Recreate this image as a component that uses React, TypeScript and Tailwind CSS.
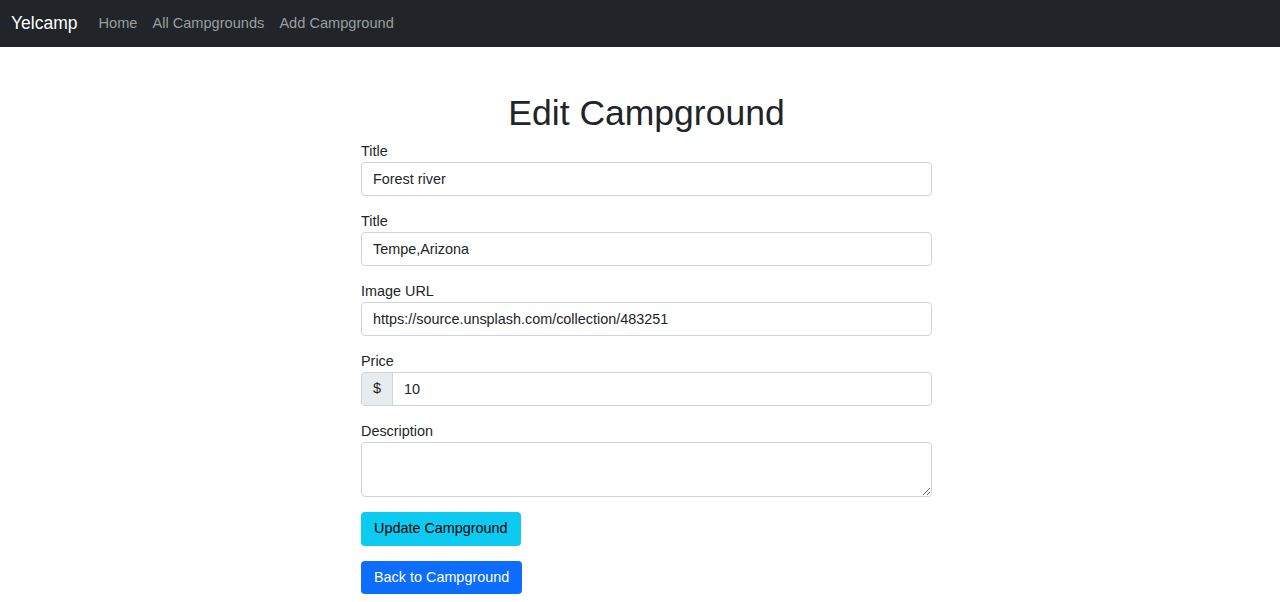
import React from 'react';

const font = { fontFamily: '"Liberation Sans", Arial, sans-serif' };

const Field = ({ label, value }: { label: string; value: string }) => (
  <div className="mb-[15px]">
    <label className="block text-[14.4px] leading-[21px] text-[#212529]">{label}</label>
    <input
      readOnly
      value={value}
      className="block h-[34px] w-full rounded-[4px] border border-[#ced4da] bg-white px-[11px] text-[14.4px] text-[#212529] outline-none"
    />
  </div>
);

export default function App() {
  return (
    <div className="min-h-screen bg-white text-[#212529]" style={font}>
      <nav className="flex h-[47px] items-center bg-[#212529] px-[11px]">
        <span className="mr-[21px] text-[17.5px] text-white">Yelcamp</span>
        <div className="flex gap-[15px] text-[14.6px] text-[#9a9da0]">
          <span>Home</span>
          <span>All Campgrounds</span>
          <span>Add Campground</span>
        </div>
      </nav>

      <div className="pl-[13px]">
        <div className="mx-auto w-[571px]">
          <h1 className="mt-[45px] mb-[7px] text-center text-[35.5px] leading-[42px] font-medium">Edit Campground</h1>
          <form>
            <Field label="Title" value="Forest river" />
            <Field label="Title" value="Tempe,Arizona" />
            <Field label="Image URL" value="https://source.unsplash.com/collection/483251" />

            <div className="mb-[15px]">
              <label className="block text-[14.4px] leading-[21px]">Price</label>
              <div className="flex h-[34px] w-full">
                <span className="flex w-[32px] items-center justify-center rounded-l-[4px] border border-[#ced4da] bg-[#e9ecef] text-[14.4px]">$</span>
                <input
                  readOnly
                  value="10"
                  className="-ml-px block h-full flex-1 rounded-r-[4px] border border-[#ced4da] bg-white px-[11px] text-[14.4px] text-[#212529] outline-none"
                />
              </div>
            </div>

            <div className="mb-[15px]">
              <label className="block text-[14.4px] leading-[21px]">Description</label>
              <textarea
                readOnly
                className="block h-[55px] w-full rounded-[4px] border border-[#ced4da] bg-white px-[11px] py-[5px] text-[14.4px] outline-none"
              />
            </div>

            <button type="button" className="mb-[15px] block h-[34px] rounded-[4px] bg-[#0dcaf0] px-[13px] text-[14.4px] text-black">
              Update Campground
            </button>
          </form>
          <button type="button" className="block h-[33px] rounded-[4px] bg-[#0d6efd] px-[13px] text-[14.4px] text-white">
            Back to Campground
          </button>
        </div>
      </div>
    </div>
  );
}
